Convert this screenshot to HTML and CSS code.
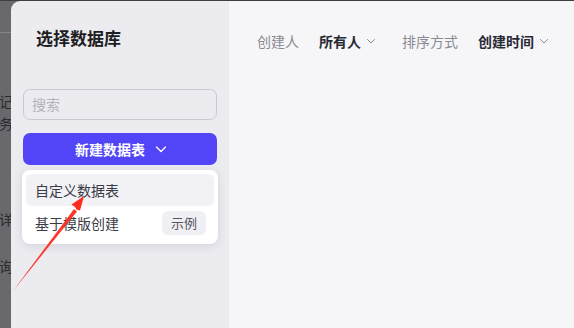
FILE: index.html
```html
<!DOCTYPE html>
<html lang="zh-CN">
<head>
    <meta charset="UTF-8">
    <meta name="viewport" content="width=device-width, initial-scale=1.0">
    <title>选择数据库</title>
    <link rel="stylesheet" href="styles.css">
</head>
<body>
    <div class="backdrop">
        <div class="backdrop-head"></div>
        <div class="backdrop-line first">记</div>
        <div class="backdrop-line">务</div>
        <div class="backdrop-line gap">详</div>
        <div class="backdrop-line gap2">询</div>
    </div>
    <div class="drawer">
        <aside class="sidebar">
            <h1 class="title">选择数据库</h1>
            <div class="search">搜索</div>
            <button class="create-btn">新建数据表
                <svg width="12" height="12" viewBox="0 0 12 12"><path d="M1.5 4 L6 8.5 L10.5 4" fill="none" stroke="#fff" stroke-width="1.3" stroke-linecap="round" stroke-linejoin="round"/></svg>
            </button>
            <div class="menu">
                <div class="menu-item active">自定义数据表</div>
                <div class="menu-item">基于模版创建<span class="tag">示例</span></div>
            </div>
        </aside>
        <main class="main">
            <div class="filters">
                <span class="label">创建人</span>
                <span class="value">所有人
                    <svg width="10" height="10" viewBox="0 0 10 10"><path d="M1.5 3.5 L5 7 L8.5 3.5" fill="none" stroke="#8a8a94" stroke-width="1" stroke-linecap="round"/></svg>
                </span>
                <span class="label">排序方式</span>
                <span class="value">创建时间
                    <svg width="10" height="10" viewBox="0 0 10 10"><path d="M1.5 3.5 L5 7 L8.5 3.5" fill="none" stroke="#8a8a94" stroke-width="1" stroke-linecap="round"/></svg>
                </span>
            </div>
        </main>
    </div>
    <svg class="arrow" width="100" height="110" viewBox="0 0 100 110">
        <polygon points="13,95 74,13 77,15.5" fill="#ff2c1c" opacity="0.95"/>
        <polygon points="84,0 71.5,8.5 75,11 76.5,13.5 80,14.5" fill="#ff2c1c"/>
    </svg>
</body>
</html>
```
FILE: styles.css
```css
* {
    margin: 0;
    padding: 0;
    box-sizing: border-box;
}
body {
    display: flex;
    height: 328px;
    overflow: hidden;
    background: #69686d;
    border-top: 1px solid #3f3e43;
    font-family: "Noto Sans CJK SC", "Noto Sans", sans-serif;
    position: relative;
}
.backdrop {
    width: 11px;
    overflow: hidden;
    white-space: nowrap;
    color: #2a2a30;
    font-size: 14px;
}
.backdrop-head {
    height: 32px;
    border-bottom: 1px solid #858489;
}
.backdrop-line {
    line-height: 22px;
    margin-left: -1px;
}
.backdrop-line.first {
    margin-top: 57px;
}
.backdrop-line.gap {
    margin-top: 74px;
}
.backdrop-line.gap2 {
    margin-top: 25px;
}
.drawer {
    flex: 1;
    display: flex;
    border-top-left-radius: 9px;
    overflow: hidden;
}
.sidebar {
    width: 218px;
    background: #ebebf0;
    padding: 25px 12px 0;
}
.title {
    font-size: 17px;
    line-height: 24px;
    font-weight: 700;
    color: #1d1d22;
    padding-left: 13px;
}
.search {
    margin-top: 39px;
    height: 31px;
    border: 1px solid #c9cad6;
    border-radius: 7px;
    padding-left: 8px;
    font-size: 14px;
    line-height: 28px;
    color: #b3b3bd;
}
.create-btn {
    margin-top: 13px;
    width: 100%;
    height: 32px;
    border: none;
    border-radius: 7px;
    background: #5245f8;
    color: #fff;
    font-family: inherit;
    font-size: 14px;
    font-weight: 700;
    display: flex;
    align-items: center;
    justify-content: center;
    gap: 10px;
    padding-left: 2px;
}
.menu {
    margin-top: 5px;
    margin-left: -1px;
    margin-right: -1px;
    background: #fff;
    border-radius: 8px;
    box-shadow: 0 2px 10px rgba(40, 40, 70, 0.12);
    padding: 4px;
}
.menu-item {
    height: 32px;
    display: flex;
    align-items: center;
    justify-content: space-between;
    padding: 0 8px 0 9px;
    font-size: 14px;
    color: #3b3b45;
    border-radius: 6px;
}
.menu-item.active {
    background: #f1f1f6;
}
.menu-item + .menu-item {
    height: 34px;
}
.tag {
    background: #efeff4;
    border-radius: 6px;
    font-size: 13px;
    color: #55555f;
    padding: 0 9px;
    line-height: 24px;
}
.main {
    flex: 1;
    background: #f6f6f8;
    padding: 29px 0 0 28px;
}
.filters {
    display: flex;
    align-items: center;
    gap: 20px;
    font-size: 14px;
    line-height: 22px;
}
.label {
    color: #8a8a94;
}
.value {
    color: #2a2a36;
    font-weight: 700;
    display: flex;
    align-items: center;
    gap: 5px;
    margin-right: 6px;
}
.arrow {
    position: absolute;
    left: 0;
    top: 195px;
}
```
